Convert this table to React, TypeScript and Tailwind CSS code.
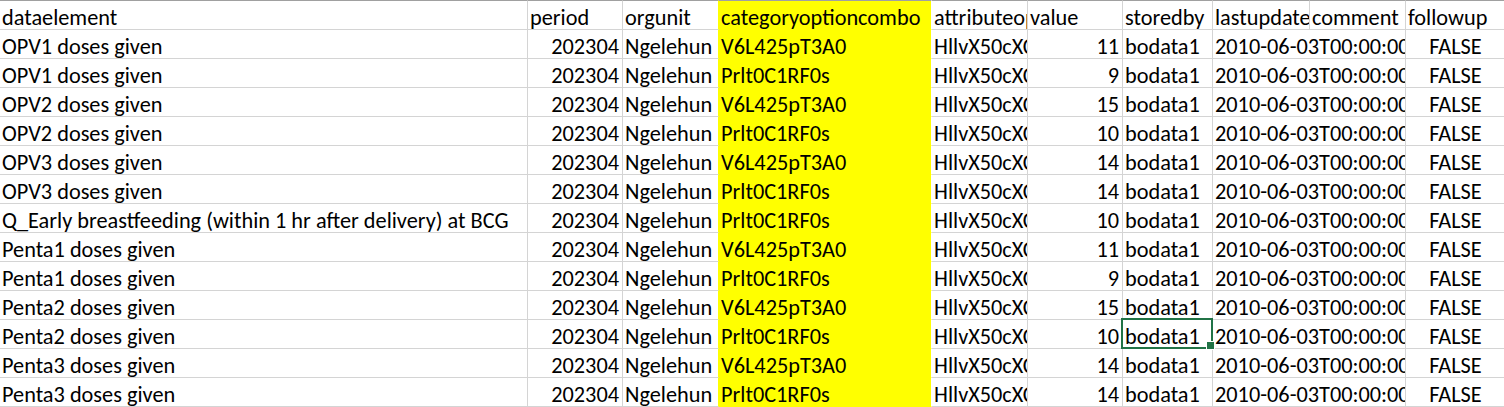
import React from "react";

type Row = { de: string; coc: string; v: number };

const V = "V6L425pT3A0";
const P = "Prlt0C1RF0s";

const rows: Row[] = [
  { de: "OPV1 doses given", coc: V, v: 11 },
  { de: "OPV1 doses given", coc: P, v: 9 },
  { de: "OPV2 doses given", coc: V, v: 15 },
  { de: "OPV2 doses given", coc: P, v: 10 },
  { de: "OPV3 doses given", coc: V, v: 14 },
  { de: "OPV3 doses given", coc: P, v: 14 },
  { de: "Q_Early breastfeeding (within 1 hr after delivery) at BCG", coc: P, v: 10 },
  { de: "Penta1 doses given", coc: V, v: 11 },
  { de: "Penta1 doses given", coc: P, v: 9 },
  { de: "Penta2 doses given", coc: V, v: 15 },
  { de: "Penta2 doses given", coc: P, v: 10 },
  { de: "Penta3 doses given", coc: V, v: 14 },
  { de: "Penta3 doses given", coc: P, v: 14 },
];

const base = "h-[29px] border-b border-r border-[#d4d4d4] whitespace-nowrap leading-[34px] relative";
const cell = `${base} overflow-hidden`;
const hcell =
  "h-[30px] border-t border-b border-r border-t-[#a0a0a0] border-[#d4d4d4] overflow-hidden whitespace-nowrap leading-[34px]";

export default function App() {
  return (
    <div
      className="w-[1504px] h-[407px] overflow-hidden bg-white text-black text-[22.3px]"
      style={{ fontFamily: "Calibri, Carlito, Lato, sans-serif" }}
    >
      <div className="grid grid-cols-[528px_95px_96px_213px_96px_95px_90px_97px_96px_100px]">
        {/* header */}
        <div className={`${hcell} pl-[2px]`}>dataelement</div>
        <div className={`${hcell} pl-[2px]`}>period</div>
        <div className={`${hcell} pl-[2px] border-r-[#ffff00]`}>orgunit</div>
        <div className={`${hcell} pl-[2px] bg-[#ffff00] border-b-[#ffff00] border-r-white`}>
          categoryoptioncombo
        </div>
        <div className={`${hcell} pl-[2px]`}>attributeoptioncombo</div>
        <div className={`${hcell} pl-[2px]`}>value</div>
        <div className={`${hcell} pl-[2px] border-t-[#217346]`}>storedby</div>
        <div className={`${hcell} pl-[2px]`}>lastupdated</div>
        <div className={`${hcell} pl-[2px]`}>comment</div>
        <div className={`${hcell} pl-[2px]`}>followup</div>

        {rows.map((r, i) => (
          <React.Fragment key={i}>
            <div className={`${cell} pl-[2px]`}>{r.de}</div>
            <div className={`${cell} pr-[3px] text-right`}>202304</div>
            <div className={`${cell} pl-[2px] border-r-[#ffff00]`}>Ngelehun</div>
            <div className={`${cell} pl-[2px] bg-[#ffff00] border-b-[#ffff00] border-r-white`}>
              {r.coc}
            </div>
            <div className={`${cell} pl-[2px]`}>HllvX50cXC0</div>
            <div className={`${cell} pr-[3px] text-right`}>{r.v}</div>
            <div className={`${base} pl-[2px] ${i === 10 ? "z-10" : ""}`}>
              bodata1
              {i === 10 && (
                <div className="absolute -top-[2px] -left-[2px] w-[92px] h-[31px] border-2 border-[#217346]">
                  <div className="absolute -right-[4px] -bottom-[3px] w-[9px] h-[9px] bg-[#217346] border border-white" />
                </div>
              )}
            </div>
            <div className={`${cell} col-span-2 pl-[2px]`}>2010-06-03T00:00:00.000</div>
            <div className={`${cell} text-center`}>FALSE</div>
          </React.Fragment>
        ))}
      </div>
    </div>
  );
}
